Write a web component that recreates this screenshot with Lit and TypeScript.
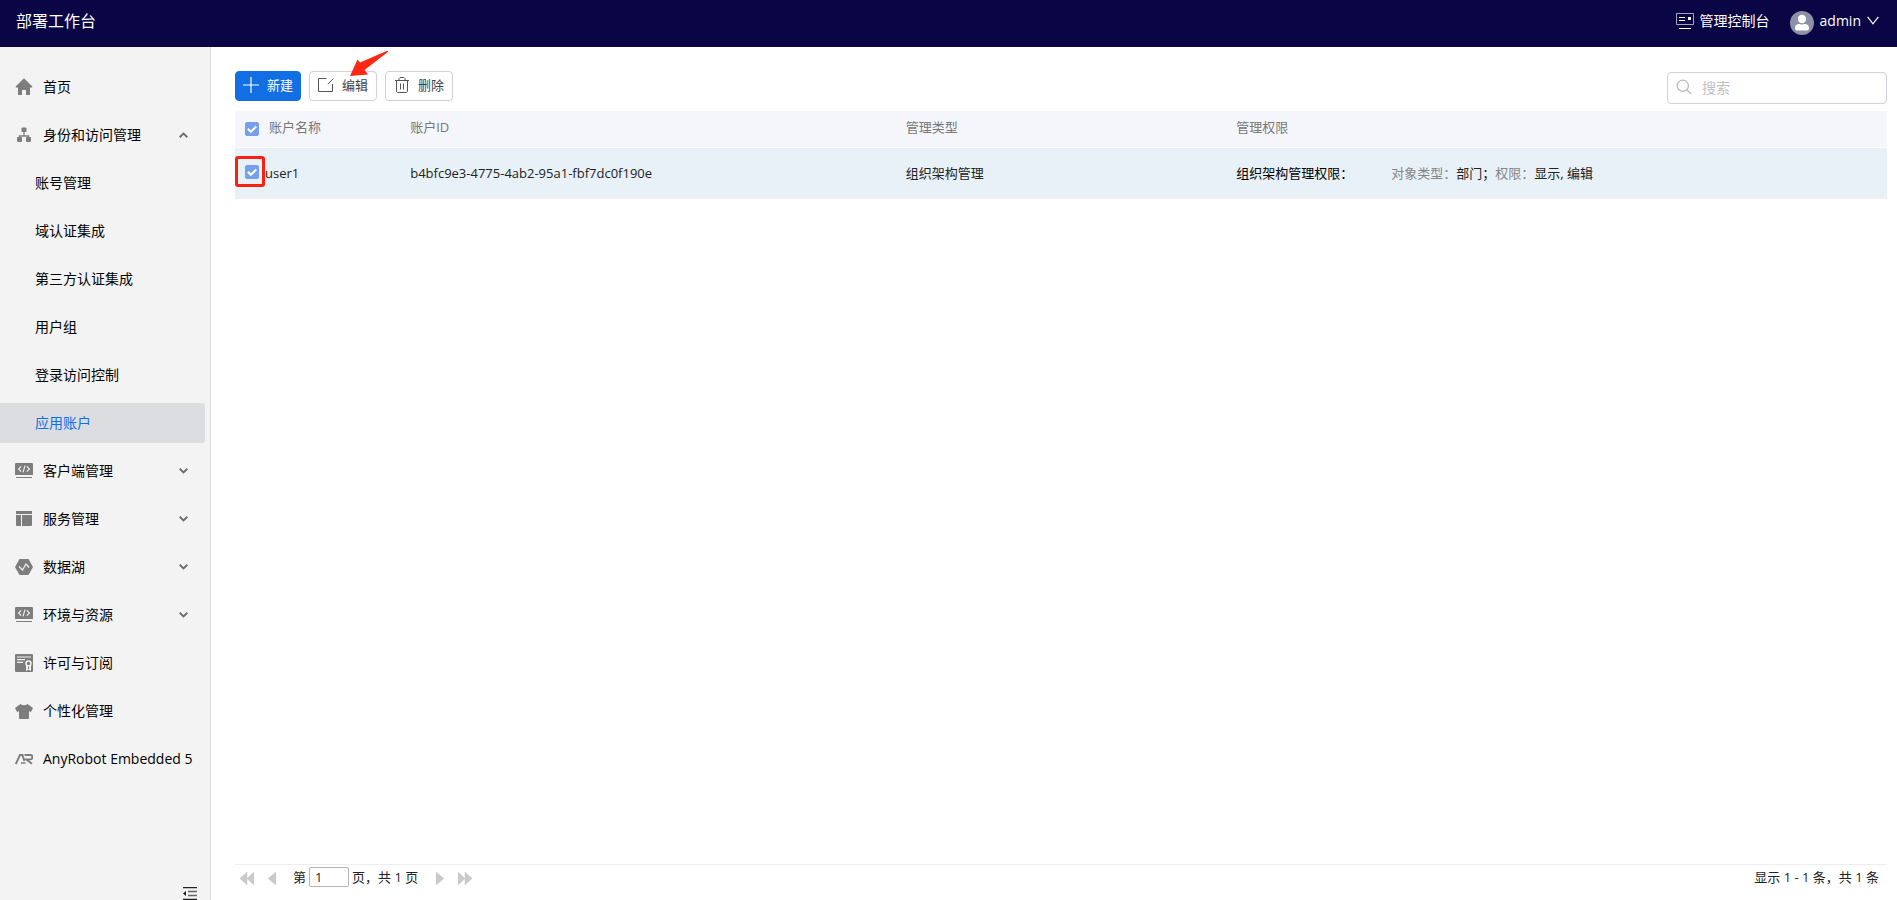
import { LitElement, html, svg, css, nothing } from "lit";
import { customElement, state } from "lit/decorators.js";
import { classMap } from "lit/directives/class-map.js";

interface NavItem {
  label: string;
  icon: string;
  children?: string[];
  expandable?: boolean;
}

const codeIcon = svg`
  <path fill="#7d7d7d" d="M1 1h16a1 1 0 0 1 1 1v11H0V2a1 1 0 0 1 1-1zM1 15h16v1H1z"/>
  <path fill="none" stroke="#f3f3f3" stroke-width="1.1" d="M6.2 4.300 3.500 7l2.700 2.700M11.800 4.300 14.500 7l-2.700 2.700M10 3.600 8 10.400"/>`;

const icons: Record<string, unknown> = {
  home: svg`<path fill="#7d7d7d" d="M9 .3 17.400 8.500l-.4.9h-2V17h-4v-5H7v5H3V9.400H1l-.4-.9z"/>`,
  org: svg`
    <path fill="none" stroke="#7d7d7d" stroke-width="1.300" d="M9 6v4M4.500 12.500V10h9v2.500"/>
    <rect x="6.500" y="1.500" width="5" height="4.500" rx="1" fill="#7d7d7d"/>
    <rect x="2" y="11" width="5" height="5" rx="1" fill="#7d7d7d"/>
    <rect x="11" y="11" width="5" height="5" rx="1" fill="#7d7d7d"/>`,
  code: codeIcon,
  service: svg`<path fill="#7d7d7d" d="M1 1h16v3H1zM1 5h5v11H2a1 1 0 0 1-1-1zM7 5h10v10a1 1 0 0 1-1 1H7z"/>`,
  lake: svg`
    <path fill="#7d7d7d" d="M5 1h8a1 1 0 0 1 .8.500L18 9l-4.200 7.500a1 1 0 0 1-.8.500H5a1 1 0 0 1-.8-.5L0 9l4.200-7.500A1 1 0 0 1 5 1z"/>
    <path fill="none" stroke="#f3f3f3" stroke-width="1.200" d="m4 8.500 3.500 3.500L11 6l3 3.500"/>`,
  license: svg`
    <rect width="18" height="18" rx="1" fill="#7d7d7d"/>
    <path fill="none" stroke="#f3f3f3" stroke-width="1.200" d="M2 3h14M2 5.700h8M2 8.300h6"/>
    <circle cx="13.500" cy="9.500" r="2.500" fill="none" stroke="#f3f3f3" stroke-width="1.500"/>
    <path fill="#f3f3f3" d="M11 11.500h5V17l-2.500-1.300L11 17z"/>
    <path fill="#7d7d7d" d="M13 12.500h1V15h-1z"/>`,
  shirt: svg`<path fill="#7d7d7d" d="M5.500 2Q9 4.500 12.500 2L18 6l-2 4-2-.8V16a1 1 0 0 1-1 1H5a1 1 0 0 1-1-1V9.200L2 10 0 6z"/>`,
  robot: svg`
    <path fill="none" stroke="#7d7d7d" stroke-width="1.900" d="M.8 14 5 5h2.500l1.800 6M9.500 5h5.700a2 2 0 0 1 0 4.400h-4l5.800 4.400"/>
    <path fill="none" stroke="#7d7d7d" stroke-width="1.500" d="M6 13h4.500"/>`,
};

const NAV: NavItem[] = [
  { label: "首页", icon: "home" },
  {
    label: "身份和访问管理",
    icon: "org",
    expandable: true,
    children: ["账号管理", "域认证集成", "第三方认证集成", "用户组", "登录访问控制", "应用账户"],
  },
  { label: "客户端管理", icon: "code", expandable: true },
  { label: "服务管理", icon: "service", expandable: true },
  { label: "数据湖", icon: "lake", expandable: true },
  { label: "环境与资源", icon: "code", expandable: true },
  { label: "许可与订阅", icon: "license" },
  { label: "个性化管理", icon: "shirt" },
  { label: "AnyRobot Embedded 5", icon: "robot" },
];

const shared = css`
  * {
    box-sizing: border-box;
  }
  svg {
    display: block;
    flex: none;
  }
  button,
  input {
    font: inherit;
    color: inherit;
    margin: 0;
  }
  button {
    border: 0;
    padding: 0;
    background: none;
    cursor: pointer;
  }
  a {
    color: inherit;
    text-decoration: none;
  }
`;

@customElement("top-bar")
class TopBar extends LitElement {
  static styles = [
    shared,
    css`
      :host {
        display: block;
      }
      .bar {
        display: flex;
        align-items: center;
        justify-content: space-between;
        height: 47px;
        padding: 0 18px 6px 16px;
        background: #0a0544;
        color: #fff;
      }
      .title {
        margin: 0;
        font-size: 16px;
        font-weight: 400;
      }
      .tools,
      .link {
        display: flex;
        align-items: center;
      }
      .tools {
        gap: 20px;
      }
      .link {
        gap: 6px;
      }
      .avatar {
        margin-top: 4px;
      }
    `,
  ];

  render() {
    return html`
      <header class="bar">
        <h1 class="title">部署工作台</h1>
        <div class="tools">
          <a class="link" href="#console">
            <svg width="18" height="16" viewBox="0 0 18 16" aria-hidden="true">
              <path fill="none" stroke="#a5a3c0" d="M.5.500h17v11H.5z" />
              <path fill="#fff" d="M3 4h6v1H3zM3 7h6v1H3zM12 4h3v3h-3zM3 15h12v1H3z" />
            </svg>
            管理控制台
          </a>
          <button class="link">
            <svg class="avatar" width="24" height="24" viewBox="0 0 24 24" aria-hidden="true">
              <circle cx="12" cy="12" r="12" fill="#8d91a8" />
              <circle cx="12" cy="8" r="4.200" fill="#fff" />
              <path fill="#fff" d="M5 17c0-3 2-4 4-4 1 0 2 .6 3 .6s2-.6 3-.6c2 0 4 1 4 4 0 2-1 2.500-2.500 2.500h-9C6 19.500 5 19 5 17z" />
            </svg>
            admin
            <svg width="12" height="9" viewBox="0 0 12 9" aria-hidden="true">
              <path fill="none" stroke="#fff" stroke-width="1.200" d="m.6.800 5.400 7 5.400-7" />
            </svg>
          </button>
        </div>
      </header>
    `;
  }
}

@customElement("side-nav")
class SideNav extends LitElement {
  @state() private open = new Set<string>(["身份和访问管理"]);
  @state() private current = "应用账户";

  static styles = [
    shared,
    css`
      :host {
        display: flex;
        flex-direction: column;
        justify-content: space-between;
        background: #f3f3f3;
        border-right: 1px solid #dadbdd;
        color: #000;
        font-size: 14px;
      }
      .list {
        display: flex;
        flex-direction: column;
        gap: 8px;
        margin: 0;
        padding: 20px 5px 0 0;
        list-style: none;
      }
      .item {
        display: flex;
        align-items: center;
        gap: 10px;
        width: 100%;
        height: 40px;
        padding: 0 17px 0 15px;
        border-radius: 0 3px 3px 0;
        text-align: left;
        white-space: nowrap;
      }
      .child {
        padding-left: 35px;
      }
      .active {
        background: #dcdde1;
        color: #126ee3;
      }
      .label {
        flex: 1;
      }
      .fold {
        align-self: flex-end;
        margin-right: 13px;
      }
    `,
  ];

  private toggle(label: string) {
    const next = new Set(this.open);
    next.has(label) ? next.delete(label) : next.add(label);
    this.open = next;
  }

  private row(item: NavItem) {
    const open = this.open.has(item.label);
    const icon = html`<svg width="18" height="18" viewBox="0 0 18 18" aria-hidden="true">${icons[item.icon]}</svg>`;
    if (!item.expandable) {
      return html`<li><a class="item" href="#">${icon}<span class="label">${item.label}</span></a></li>`;
    }
    return html`
      <li>
        <button class="item" aria-expanded=${open} @click=${() => this.toggle(item.label)}>
          ${icon}<span class="label">${item.label}</span>
          <svg width="9" height="6" viewBox="0 0 9 6" aria-hidden="true">
            <path fill="none" stroke="#6f6f6f" stroke-width="1.900" d=${open ? "M.7 5.200 4.500 1.500l3.800 3.700" : "M.7.800l3.800 3.700L8.300.8"} />
          </svg>
        </button>
      </li>
      ${open && item.children
        ? item.children.map(
            (c) => html`<li>
              <a
                class=${classMap({ item: true, child: true, active: c === this.current })}
                href="#"
                @click=${() => (this.current = c)}
                ><span class="label">${c}</span></a
              >
            </li>`
          )
        : nothing}
    `;
  }

  render() {
    return html`
      <nav aria-label="主导航">
        <ul class="list">
          ${NAV.map((item) => this.row(item))}
        </ul>
      </nav>
      <button class="fold" aria-label="收起">
        <svg width="14" height="13" viewBox="0 0 14 13" aria-hidden="true">
          <path fill="#222" d="M0 0h14v1.300H0zM0 11.700h14V13H0zM0 6.500 3 4v5z" />
          <path fill="#666" d="M5 3.800h9v1.400H5zM5 7.800h9v1.400H5z" />
        </svg>
      </button>
    `;
  }
}

@customElement("account-page")
class AccountPage extends LitElement {
  @state() private checked = true;

  static styles = [
    shared,
    css`
      :host {
        display: flex;
        flex-direction: column;
        min-width: 0;
        padding: 24px 10px 0 24px;
        font-size: 13px;
        color: #222;
      }
      .toolbar {
        display: flex;
        align-items: flex-start;
        gap: 8px;
        height: 40px;
      }
      .btn {
        position: relative;
        display: flex;
        align-items: center;
        gap: 8px;
        height: 30px;
        padding: 0 8px 2px;
        border: 1px solid #cfd0da;
        border-radius: 4px;
        background: #fff;
        color: #444;
      }
      .primary {
        padding: 0 7px 2px;
        border-color: #126ee3;
        background: #126ee3;
        color: #fff;
      }
      .arrow {
        position: absolute;
        left: 39px;
        top: -22px;
      }
      .search {
        display: flex;
        align-items: center;
        gap: 10px;
        width: 220px;
        height: 32px;
        margin: 1px 0 0 auto;
        padding: 0 8px;
        border: 1px solid #cfd0da;
        border-radius: 4px;
      }
      .search svg {
        margin-bottom: 2px;
      }
      .search input {
        flex: 1;
        min-width: 0;
        padding: 0;
        border: 0;
        outline: 0;
        background: none;
        font-size: 14px;
      }
      .search input::placeholder {
        color: #bfbfbf;
      }
      .table {
        width: 100%;
        table-layout: fixed;
        border-collapse: separate;
        border-spacing: 0;
      }
      .name {
        width: 10%;
      }
      .id {
        width: 30%;
      }
      .type {
        width: 20%;
      }
      th,
      td {
        padding: 0 10px;
        text-align: left;
        white-space: nowrap;
      }
      th {
        height: 37px;
        padding-bottom: 4px;
        border-bottom: 1px solid #fff;
        background: #f5f6fb;
        color: #777;
        font-weight: 400;
      }
      td {
        height: 51px;
        border-bottom: 1px solid #eee;
        background: #e8f1f7;
      }
      .pick {
        display: flex;
        align-items: center;
        gap: 10px;
      }
      td .pick {
        gap: 6px;
      }
      .box {
        position: relative;
        display: grid;
        width: 14px;
        height: 14px;
        margin-top: 4px;
      }
      td .box {
        margin-top: -2px;
      }
      .box input,
      .box svg {
        grid-area: 1 / 1;
      }
      .box input {
        appearance: none;
        width: 14px;
        height: 14px;
        border: 1px solid #769fec;
        border-radius: 2px;
        background: #fff;
      }
      .box input:checked {
        background: #769fec;
      }
      .box svg {
        z-index: 1;
        pointer-events: none;
      }
      .mark {
        position: absolute;
        inset: -9px -6px -8px -10px;
        border: 3px solid #fb2012;
        border-radius: 3px;
        pointer-events: none;
      }
      .rights {
        display: flex;
        gap: 38px;
        color: #000;
      }
      .detail {
        color: #222;
      }
      .muted {
        color: #858585;
      }
      .pager {
        display: flex;
        align-items: center;
        justify-content: space-between;
        height: 36px;
        margin-top: auto;
        padding: 0 8px 12px 5px;
        border-top: 1px solid #eee;
      }
      .pages,
      .pageno {
        display: flex;
        align-items: center;
      }
      .pages {
        gap: 14px;
      }
      .pages button {
        margin-top: 4px;
      }
      .pageno {
        gap: 3px;
        padding: 0 4px 0 3px;
      }
      .pageno input {
        width: 40px;
        height: 20px;
        padding: 0 5px;
        border: 1px solid #b5b5b5;
        border-radius: 2px;
        background: #fff;
      }
    `,
  ];

  private checkbox(label: string, mark = false) {
    return html`<span class="box">
      <input
        type="checkbox"
        aria-label=${label}
        .checked=${this.checked}
        @change=${(e: Event) => (this.checked = (e.target as HTMLInputElement).checked)}
      />
      <svg width="14" height="14" viewBox="0 0 14 14" aria-hidden="true">
        <path fill="none" stroke="#fff" stroke-width="2" d="m2.800 6.800 3 3L11.300 4.500" />
      </svg>
      ${mark ? html`<span class="mark"></span>` : nothing}
    </span>`;
  }

  private arrow(double: boolean, right: boolean, label: string) {
    const left = double ? "M7 0v13L0 6.500zM14 0v13L7 6.500z" : "M8 0v13L0 6.500z";
    const fwd = double ? "M0 0l7 6.500L0 13zM7 0l7 6.500L7 13z" : "M0 0l8 6.500L0 13z";
    const w = double ? 14 : 8;
    return html`<button aria-label=${label}>
      <svg width=${w} height="13" viewBox="0 0 ${w} 13" aria-hidden="true">
        <path fill="#c9c9c9" stroke="#c9c9c9" stroke-width=".5" d=${right ? fwd : left} />
      </svg>
    </button>`;
  }

  render() {
    return html`
      <div class="toolbar">
        <button class="btn primary">
          <svg width="16" height="16" viewBox="0 0 16 16" aria-hidden="true">
            <path fill="none" stroke="#fff" stroke-width="1.200" d="M8 0v16M0 8h16" />
          </svg>
          新建
        </button>
        <button class="btn">
          <svg width="16" height="14" viewBox="0 0 16 14" aria-hidden="true">
            <path fill="none" stroke="#555" d="M8.500.500h-8v13h14V6M15.500.500 9.800 6.200" />
          </svg>
          编辑
          <svg class="arrow" width="42" height="28" viewBox="0 0 42 28" aria-hidden="true">
            <path fill="#fe2712" d="M1 26 8.500 9.500l2.500 3L37 1.200q2-.8 2 .2-.2.800-1.500 1.700L15.500 20l3.500 4.500z" />
          </svg>
        </button>
        <button class="btn">
          <svg width="16" height="16" viewBox="0 0 16 16" aria-hidden="true">
            <path fill="none" stroke="#555" d="M1 3.500h14M5 3V1.500L6 .500h4l1 1V3M2.500 3.500v11l1 1h9l1-1v-11M6.500 6.500v6M9.500 6.500v6" />
          </svg>
          删除
        </button>
        <label class="search">
          <svg width="16" height="16" viewBox="0 0 16 16" aria-hidden="true">
            <circle cx="6.800" cy="6.800" r="5.600" fill="none" stroke="#b8b8b8" stroke-width="1.200" />
            <path stroke="#b8b8b8" stroke-width="1.200" d="m11 11 4.200 4" />
          </svg>
          <input type="text" placeholder="搜索" aria-label="搜索" />
        </label>
      </div>

      <table class="table">
        <thead>
          <tr>
            <th class="name"><div class="pick">${this.checkbox("全选")}账户名称</div></th>
            <th class="id">账户ID</th>
            <th class="type">管理类型</th>
            <th>管理权限</th>
          </tr>
        </thead>
        <tbody>
          <tr>
            <td><div class="pick">${this.checkbox("user1", true)}user1</div></td>
            <td>b4bfc9e3-4775-4ab2-95a1-fbf7dc0f190e</td>
            <td>组织架构管理</td>
            <td>
              <div class="rights">
                <span>组织架构管理权限：</span>
                <span class="detail"
                  ><span class="muted">对象类型：</span>部门；<span class="muted">权限：</span>显示, 编辑</span
                >
              </div>
            </td>
          </tr>
        </tbody>
      </table>

      <footer class="pager">
        <div class="pages">
          ${this.arrow(true, false, "首页")}${this.arrow(false, false, "上一页")}
          <label class="pageno">第 <input type="text" value="1" /> 页，共 1 页</label>
          ${this.arrow(false, true, "下一页")}${this.arrow(true, true, "末页")}
        </div>
        <span>显示 1 - 1 条，共 1 条</span>
      </footer>
    `;
  }
}

@customElement("app-root")
class AppRoot extends LitElement {
  static styles = css`
    :host {
      display: grid;
      grid-template-rows: auto 1fr;
      min-height: 100vh;
      background: #fff;
      font-family: "Open Sans", "Noto Sans CJK SC", sans-serif;
      font-size: 14px;
      line-height: 20px;
    }
    .body {
      display: grid;
      grid-template-columns: 211px 1fr;
    }
  `;

  render() {
    return html`
      <top-bar></top-bar>
      <div class="body">
        <side-nav></side-nav>
        <account-page></account-page>
      </div>
    `;
  }
}
